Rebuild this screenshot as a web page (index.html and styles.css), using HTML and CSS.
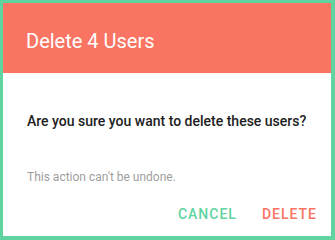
FILE: index.html
```html
<!DOCTYPE html>
<html>
<head>
<meta charset="utf-8">
<link rel="stylesheet" href="styles.css">
</head>
<body>
<div class="dialog">
  <div class="dialog-header">
    <h1 class="dialog-title">Delete 4 Users</h1>
  </div>
  <div class="dialog-body">
    <p class="question">Are you sure you want to delete these users?</p>
    <p class="note">This action can't be undone.</p>
  </div>
  <div class="dialog-actions">
    <button class="btn btn-cancel">Cancel</button>
    <button class="btn btn-delete">Delete</button>
  </div>
</div>
</body>
</html>
```
FILE: styles.css
```css
html, body {
  margin: 0;
  padding: 0;
}
body {
  width: 335px;
  height: 240px;
  background: #5fd4a0;
  padding: 3px 4px 4px 3px;
  box-sizing: border-box;
  font-family: Roboto, "Liberation Sans", sans-serif;
}
.dialog {
  background: #ffffff;
  height: 233px;
  display: flex;
  flex-direction: column;
}
.dialog-header {
  background: #f97462;
  height: 70px;
  box-sizing: border-box;
  padding: 26px 23px 0;
}
.dialog-title {
  margin: 0;
  font-size: 20px;
  line-height: 24px;
  font-weight: 400;
  color: #ffffff;
}
.dialog-body {
  padding: 38px 23px 0 24px;
}
.question {
  margin: 0;
  font-size: 14px;
  line-height: 20px;
  font-weight: 500;
  color: #212121;
}
.note {
  margin: 38px 0 0;
  font-size: 12px;
  line-height: 16px;
  font-weight: 400;
  color: #9e9e9e;
}
.dialog-actions {
  display: flex;
  justify-content: flex-end;
  gap: 25px;
  padding: 19px 14px 0 0;
}
.btn {
  border: none;
  background: none;
  padding: 0;
  font-family: inherit;
  font-size: 14px;
  line-height: 20px;
  font-weight: 500;
  letter-spacing: 1px;
  text-transform: uppercase;
}
.btn-cancel {
  color: #5fd4a0;
}
.btn-delete {
  color: #f97462;
}
```
